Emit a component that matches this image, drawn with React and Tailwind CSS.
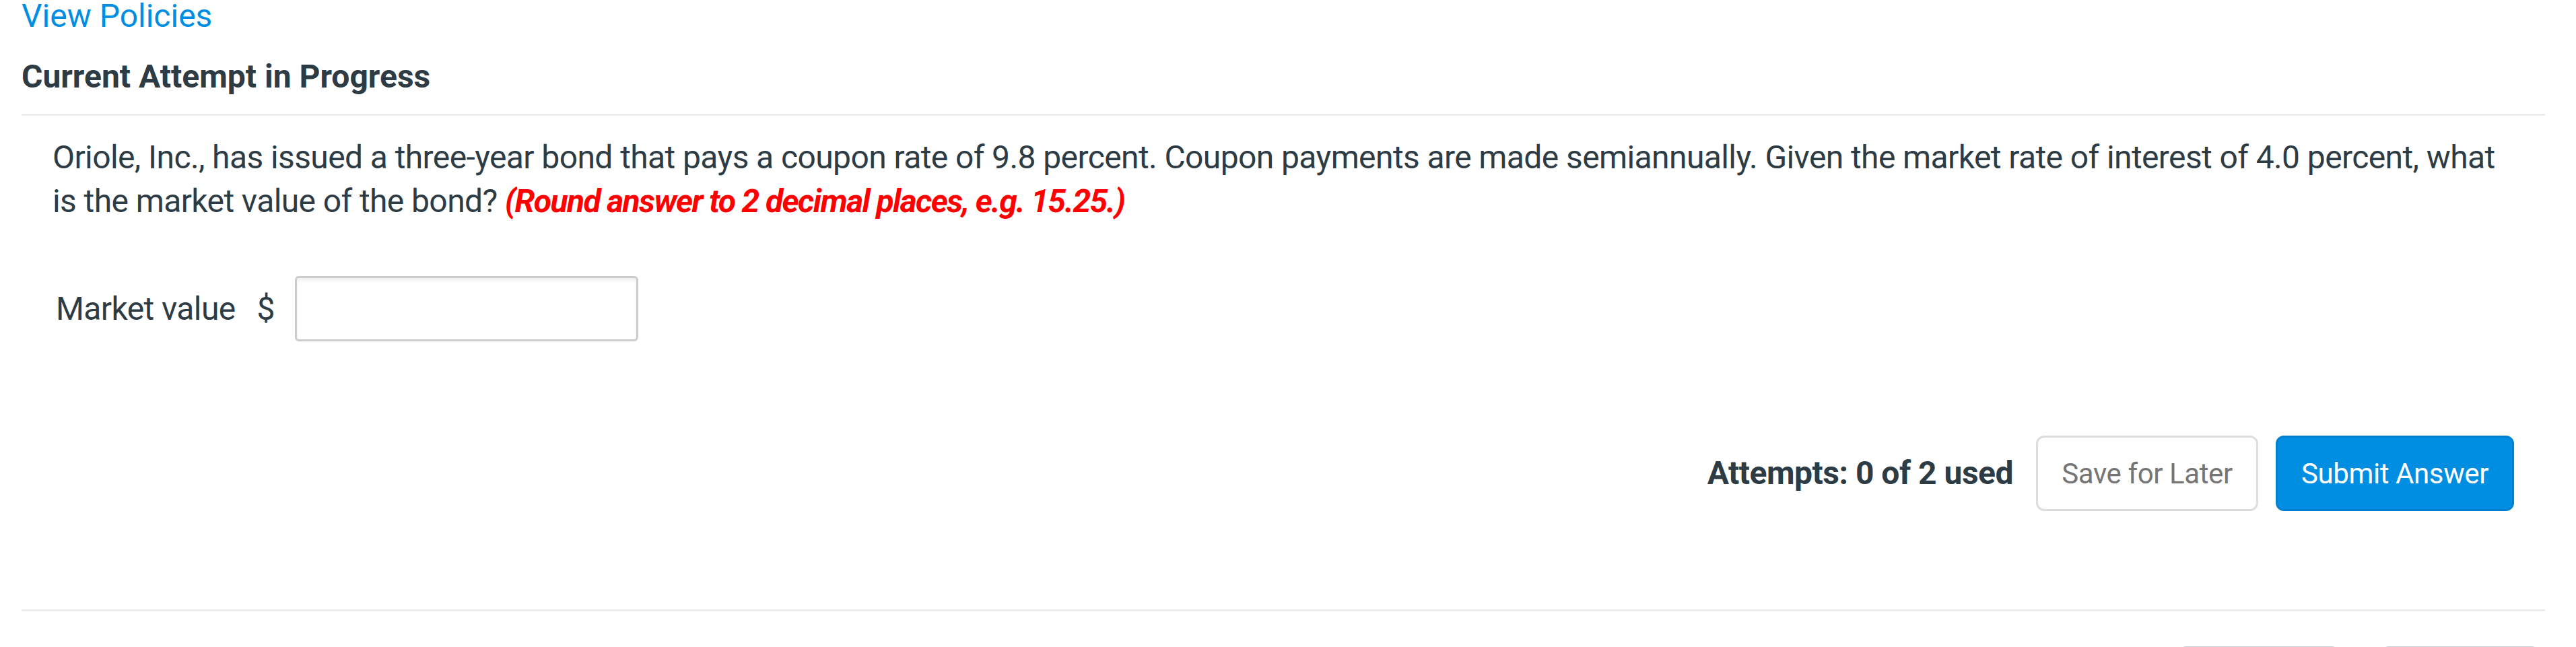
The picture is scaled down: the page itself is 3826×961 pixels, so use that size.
export default function App() {
  return (
    <div
      className="h-[961px] overflow-hidden bg-white pl-[32px] pr-[46px] text-[#2d3b45]"
      style={{ fontFamily: "Roboto, 'Noto Sans', sans-serif" }}
    >
      {/* Header */}
      <a className="block text-[48px] leading-[48px] text-[#008ee2]" href="#">
        View Policies
      </a>
      <h2 className="mt-[42px] text-[48px] font-bold leading-[48px]">
        Current Attempt in Progress
      </h2>

      <div className="mt-[31px] h-[3px] bg-[#ececec]" />

      {/* Question body */}
      <section className="px-[46px]">
        <p className="mt-[29px] text-[48px] leading-[65px] tracking-[-0.6px]">
          Oriole, Inc., has issued a three-year bond that pays a coupon rate of
          9.8 percent. Coupon payments are made semiannually. Given the market
          rate of interest of 4.0 percent, what is the market value of the
          bond?{" "}
          <span className="font-bold italic tracking-[-1.6px] text-[#ff0000]">
            (Round answer to 2 decimal places, e.g. 15.25.)
          </span>
        </p>

        <div className="mt-[79px] flex items-center pl-[5px] text-[48px] tracking-[-0.6px]">
          <span>Market value</span>
          <span className="ml-[32px]">$</span>
          <input
            type="text"
            className="ml-[30px] h-[97px] w-[510px] rounded-[6px] border-[3px] border-[#cccccc] bg-white shadow-[inset_0_4px_4px_rgba(0,0,0,0.06)] outline-none"
          />
        </div>

        {/* Submit row */}
        <div className="mt-[140px] flex items-center justify-end">
          <span className="text-[48px] font-bold tracking-[-0.5px]">
            Attempts: 0 of 2 used
          </span>
          <button className="ml-[34px] h-[112px] w-[330px] rounded-[12px] border-[3px] border-[#dddddd] bg-white text-[42px] tracking-[-0.4px] text-[#757575]">
            Save for Later
          </button>
          <button className="ml-[26px] h-[112px] w-[354px] rounded-[12px] border-[3px] border-[#0081cf] bg-[#008ee2] text-[42px] tracking-[-0.4px] text-white">
            Submit Answer
          </button>
        </div>
      </section>

      <div className="mt-[146px] h-[3px] bg-[#ececec]" />

      {/* Footer nav (cut off by the window) */}
      <div className="mt-[52px] flex justify-end gap-[61px] pr-[8px]">
        <button className="h-[110px] w-[240px] rounded-[12px] border-[3px] border-[#c7cdd1] bg-[#f5f5f5] text-[42px] text-[#2d3b45]">
          Previous
        </button>
        <button className="h-[110px] w-[236px] rounded-[12px] border-[3px] border-[#c7cdd1] bg-[#f5f5f5] text-[42px] text-[#2d3b45]">
          Next
        </button>
      </div>
    </div>
  );
}
